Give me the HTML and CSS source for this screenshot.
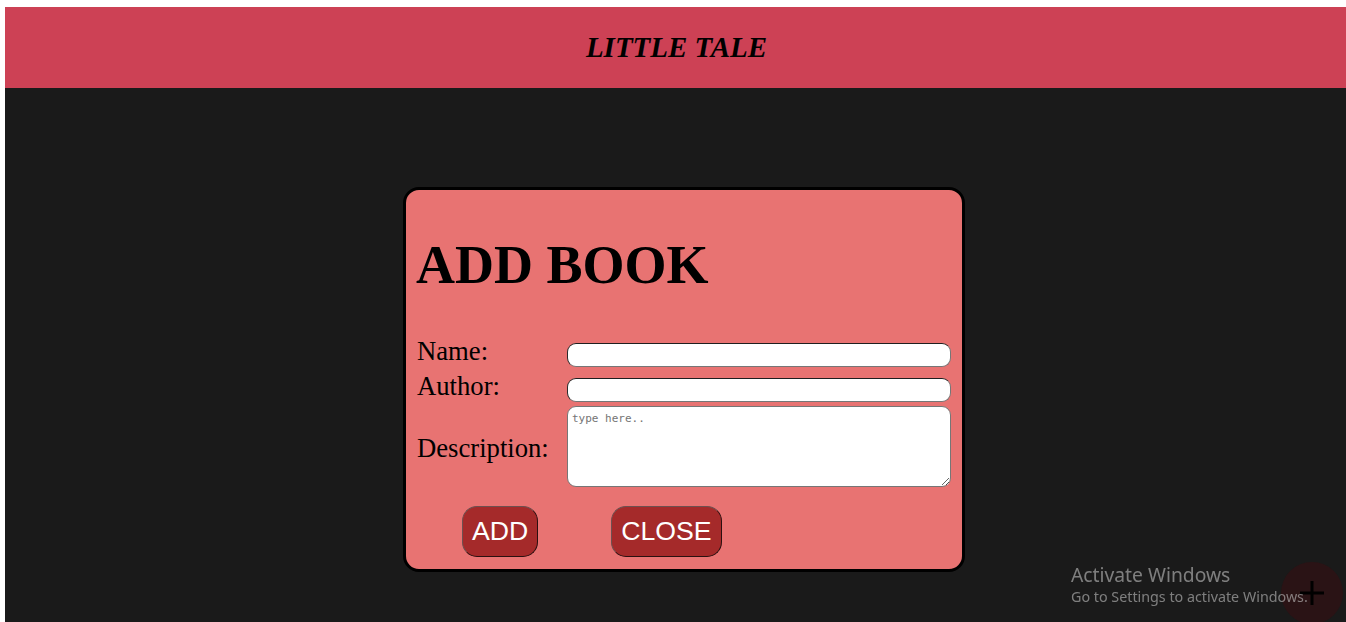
FILE: index.html
```html
<!DOCTYPE html>
<html lang="en">
<head>
<meta charset="utf-8">
<title>Little Tale</title>
<link rel="stylesheet" href="styles.css">
</head>
<body>
<div class="app">
  <header class="topbar">
    <h2 class="brand">LITTLE TALE</h2>
  </header>
  <main class="stage">
    <section class="modal">
      <h1 class="modal-title">ADD BOOK</h1>
      <form class="book-form">
        <label class="lbl" for="name">Name:</label>
        <input class="field" id="name" type="text">
        <label class="lbl" for="author">Author:</label>
        <input class="field" id="author" type="text">
        <label class="lbl lbl-mid" for="desc">Description:</label>
        <textarea class="area" id="desc" placeholder="type here.."></textarea>
      </form>
      <div class="actions">
        <button class="btn" type="button">ADD</button>
        <button class="btn" type="button">CLOSE</button>
      </div>
    </section>
  </main>
</div>
<button class="fab" type="button" aria-label="add">
  <svg width="26" height="26" viewBox="0 0 26 26"><path d="M13 1v24M1 13h24" stroke="#000" stroke-width="3"/></svg>
</button>
<div class="watermark">
  <div class="wm-title">Activate Windows</div>
  <div class="wm-sub">Go to Settings to activate Windows.</div>
</div>
</body>
</html>
```

FILE: styles.css
```css
html, body {
  margin: 0;
  padding: 0;
  background: #ffffff;
  height: 100%;
  overflow: hidden;
}
body {
  padding: 7px 0 0 5px;
  box-sizing: border-box;
  font-family: "Liberation Serif", "Times New Roman", serif;
}
.app {
  display: flex;
  flex-direction: column;
  height: 100%;
}
.topbar {
  background: #cd4155;
  height: 81px;
  display: flex;
  align-items: center;
  justify-content: center;
  flex: none;
}
.brand {
  margin: 0;
  font-size: 29px;
  font-style: italic;
  font-weight: bold;
  color: #000;
  line-height: 1;
  position: relative;
  left: 1px;
}
.stage {
  flex: 1;
  background: #1a1a1a;
  padding: 99px 0 0 398px;
}
.modal {
  width: 534px;
  background: #e87372;
  border: 3px solid #000;
  border-radius: 16px;
  padding: 8px 11px 12px;
}
.modal-title {
  margin: 36px 0 40px;
  font-size: 54px;
  font-weight: bold;
  line-height: normal;
  color: #000;
  position: relative;
  left: -1px;
}
.book-form {
  display: grid;
  grid-template-columns: 150px 384px;
  row-gap: 4px;
  align-items: end;
}
.lbl {
  font-size: 26.67px;
  line-height: normal;
  color: #000;
}
.lbl-mid {
  align-self: center;
  position: relative;
  top: 2px;
}
.field {
  height: 24px;
  box-sizing: border-box;
  border-radius: 9px;
  border: 1px solid #767676;
  border-top-color: #1f1f1f;
  border-left-color: #2a2a2a;
  background: #fff;
  margin: 0;
  padding: 1px 8px;
}
.area {
  height: 81px;
  box-sizing: border-box;
  border-radius: 9px;
  border: 1px solid #767676;
  background: #fff;
  margin: 0;
  padding: 5px 4px;
  font-family: "DejaVu Sans Mono", "Liberation Mono", monospace;
  font-size: 11px;
  resize: both;
}
.area::placeholder {
  color: #757575;
}
.actions {
  display: flex;
  gap: 73px;
  margin: 19px 0 0 45px;
}
.btn {
  background: #a52a2a;
  color: #fff;
  font-family: "Liberation Sans", Arial, sans-serif;
  font-size: 26.67px;
  line-height: normal;
  padding: 9px 9px;
  border-radius: 15px;
  border: 1px solid #2a1010;
  border-top-color: #6d5050;
  border-left-color: #6d5050;
  height: 51px;
  box-sizing: border-box;
  display: flex;
  align-items: center;
}
.fab {
  position: fixed;
  right: 3px;
  bottom: -2px;
  width: 62px;
  height: 62px;
  border-radius: 50%;
  background: #2a1315;
  border: none;
  padding: 0;
  display: flex;
  align-items: center;
  justify-content: center;
}
.watermark {
  position: fixed;
  left: 1071px;
  top: 563px;
  font-family: "Noto Sans", "Open Sans", sans-serif;
  color: rgba(200, 200, 200, 0.58);
  pointer-events: none;
}
.wm-title {
  font-size: 19.3px;
  line-height: 24px;
}
.wm-sub {
  font-size: 14.3px;
  line-height: 20px;
}
```
